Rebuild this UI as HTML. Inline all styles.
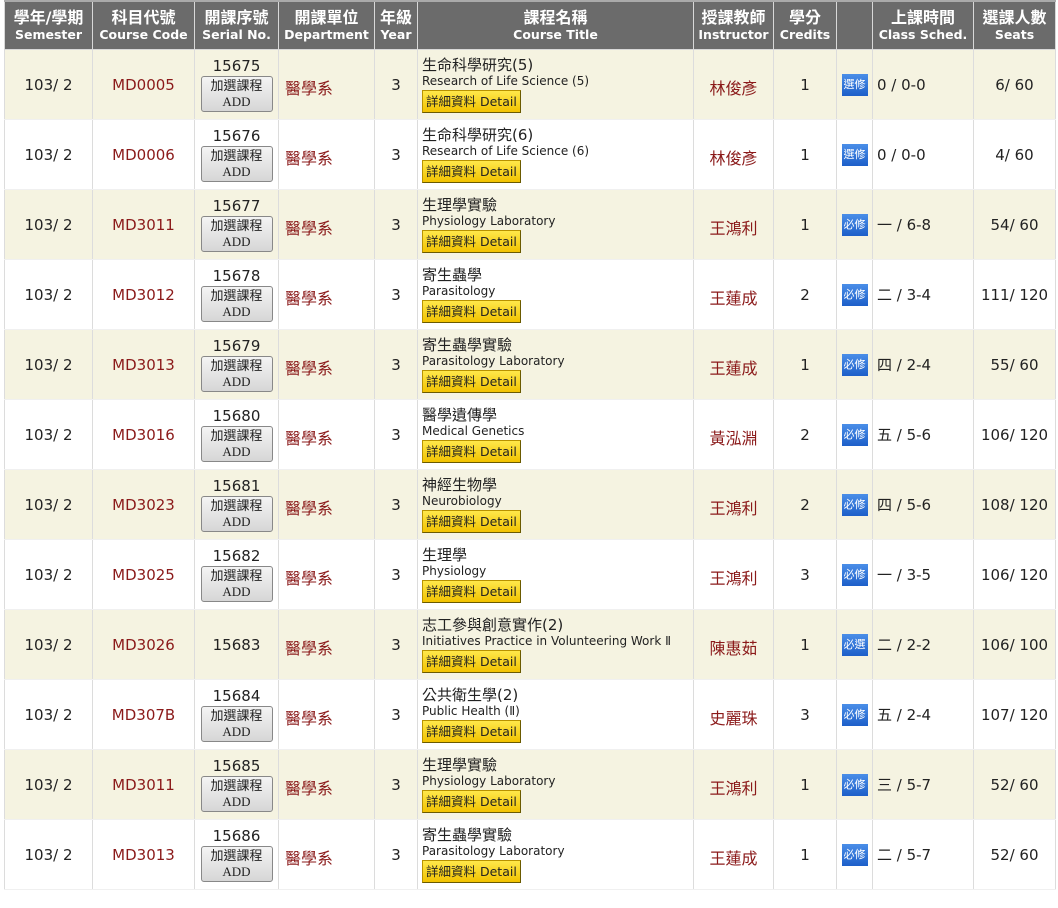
<!DOCTYPE html>
<html><head><meta charset="utf-8">
<style>
body{margin:0;background:#fff;width:1058px;height:908px;overflow:hidden;font-family:"DejaVu Sans","Noto Sans CJK TC",sans-serif;}
table{position:absolute;left:4px;top:0;border-collapse:collapse;table-layout:fixed;width:1051px;}
th{background:#6b6b6b;color:#fff;height:47px;padding:0;border:1px solid #d8d8d8;border-top:2px solid #aaa;font-size:16px;line-height:18px;font-weight:bold;white-space:nowrap;overflow:hidden}
th small{font-size:12.5px;line-height:15px;display:block;}
td{height:69px;padding:0;border:1px solid #dcdcdc;border-top:none;border-bottom:1px solid #f0f0f0;text-align:center;vertical-align:middle;font-size:15px;color:#222;}
tr.o td{background:#f5f3e1;}
.r{color:#8b1a1a;}
.i{font-size:16px;}
.dep{text-align:left;padding-left:6px;color:#8b1a1a;font-size:16px;}
.i span,.dep span{position:relative;top:2px}
.sn{line-height:18px;}
.add{display:block;margin:1px auto 0;width:72px;height:36px;box-sizing:border-box;border:1px solid #888;border-radius:3px;background:linear-gradient(#f4f4f4,#d6d6d6);font-size:13px;line-height:16px;color:#222;padding-top:1px;font-family:"Liberation Serif","Noto Sans CJK TC",serif}
.tt{text-align:left;padding-left:4px;white-space:nowrap}
.tt .c{font-size:15px;line-height:17px;}
.tt .e{font-size:12px;line-height:14px;}
.det{display:inline-block;margin-top:2px;height:21px;line-height:21px;padding:0 3px;background:linear-gradient(#ffe84a,#f2c200);border:1px solid #b89200;border-right-color:#6a5a00;border-bottom-color:#6a5a00;font-size:12.5px;color:#222;}
.tag{display:inline-block;width:26px;height:22px;background:linear-gradient(#4a8ee8,#1d5fc9);color:#fff;font-size:11px;line-height:22px;text-align:center;}
.sch{text-align:left;padding-left:4px;}
</style></head><body>
<table>
<colgroup><col style="width:88px"><col style="width:102px"><col style="width:84px"><col style="width:96px"><col style="width:43px"><col style="width:276px"><col style="width:80px"><col style="width:63px"><col style="width:36px"><col style="width:101px"><col style="width:82px"></colgroup>
<tr><th>學年/學期<small>Semester</small></th><th>科目代號<small>Course Code</small></th><th>開課序號<small>Serial No.</small></th><th>開課單位<small>Department</small></th><th>年級<small>Year</small></th><th>課程名稱<small>Course Title</small></th><th>授課教師<small>Instructor</small></th><th>學分<small>Credits</small></th><th></th><th>上課時間<small>Class Sched.</small></th><th>選課人數<small>Seats</small></th></tr>

<tr class="o"><td>103/ 2</td><td class="r">MD0005</td><td class="sn">15675<span class="add">加選課程<br>ADD</span></td><td class="dep"><span>醫學系</span></td><td>3</td><td class="tt"><div class="c">生命科學研究(5)</div><div class="e">Research of Life Science (5)</div><span class="det">詳細資料 Detail</span></td><td class="r i"><span>林俊彥</span></td><td>1</td><td><span class="tag">選修</span></td><td class="sch">0 / 0-0</td><td>6/ 60</td></tr>

<tr><td>103/ 2</td><td class="r">MD0006</td><td class="sn">15676<span class="add">加選課程<br>ADD</span></td><td class="dep"><span>醫學系</span></td><td>3</td><td class="tt"><div class="c">生命科學研究(6)</div><div class="e">Research of Life Science (6)</div><span class="det">詳細資料 Detail</span></td><td class="r i"><span>林俊彥</span></td><td>1</td><td><span class="tag">選修</span></td><td class="sch">0 / 0-0</td><td>4/ 60</td></tr>

<tr class="o"><td>103/ 2</td><td class="r">MD3011</td><td class="sn">15677<span class="add">加選課程<br>ADD</span></td><td class="dep"><span>醫學系</span></td><td>3</td><td class="tt"><div class="c">生理學實驗</div><div class="e">Physiology Laboratory</div><span class="det">詳細資料 Detail</span></td><td class="r i"><span>王鴻利</span></td><td>1</td><td><span class="tag">必修</span></td><td class="sch">一 / 6-8</td><td>54/ 60</td></tr>

<tr><td>103/ 2</td><td class="r">MD3012</td><td class="sn">15678<span class="add">加選課程<br>ADD</span></td><td class="dep"><span>醫學系</span></td><td>3</td><td class="tt"><div class="c">寄生蟲學</div><div class="e">Parasitology</div><span class="det">詳細資料 Detail</span></td><td class="r i"><span>王蓮成</span></td><td>2</td><td><span class="tag">必修</span></td><td class="sch">二 / 3-4</td><td>111/ 120</td></tr>

<tr class="o"><td>103/ 2</td><td class="r">MD3013</td><td class="sn">15679<span class="add">加選課程<br>ADD</span></td><td class="dep"><span>醫學系</span></td><td>3</td><td class="tt"><div class="c">寄生蟲學實驗</div><div class="e">Parasitology Laboratory</div><span class="det">詳細資料 Detail</span></td><td class="r i"><span>王蓮成</span></td><td>1</td><td><span class="tag">必修</span></td><td class="sch">四 / 2-4</td><td>55/ 60</td></tr>

<tr><td>103/ 2</td><td class="r">MD3016</td><td class="sn">15680<span class="add">加選課程<br>ADD</span></td><td class="dep"><span>醫學系</span></td><td>3</td><td class="tt"><div class="c">醫學遺傳學</div><div class="e">Medical Genetics</div><span class="det">詳細資料 Detail</span></td><td class="r i"><span>黃泓淵</span></td><td>2</td><td><span class="tag">必修</span></td><td class="sch">五 / 5-6</td><td>106/ 120</td></tr>

<tr class="o"><td>103/ 2</td><td class="r">MD3023</td><td class="sn">15681<span class="add">加選課程<br>ADD</span></td><td class="dep"><span>醫學系</span></td><td>3</td><td class="tt"><div class="c">神經生物學</div><div class="e">Neurobiology</div><span class="det">詳細資料 Detail</span></td><td class="r i"><span>王鴻利</span></td><td>2</td><td><span class="tag">必修</span></td><td class="sch">四 / 5-6</td><td>108/ 120</td></tr>

<tr><td>103/ 2</td><td class="r">MD3025</td><td class="sn">15682<span class="add">加選課程<br>ADD</span></td><td class="dep"><span>醫學系</span></td><td>3</td><td class="tt"><div class="c">生理學</div><div class="e">Physiology</div><span class="det">詳細資料 Detail</span></td><td class="r i"><span>王鴻利</span></td><td>3</td><td><span class="tag">必修</span></td><td class="sch">一 / 3-5</td><td>106/ 120</td></tr>

<tr class="o"><td>103/ 2</td><td class="r">MD3026</td><td>15683</td><td class="dep"><span>醫學系</span></td><td>3</td><td class="tt"><div class="c">志工參與創意實作(2)</div><div class="e">Initiatives Practice in Volunteering Work Ⅱ</div><span class="det">詳細資料 Detail</span></td><td class="r i"><span>陳惠茹</span></td><td>1</td><td><span class="tag">必選</span></td><td class="sch">二 / 2-2</td><td>106/ 100</td></tr>

<tr><td>103/ 2</td><td class="r">MD307B</td><td class="sn">15684<span class="add">加選課程<br>ADD</span></td><td class="dep"><span>醫學系</span></td><td>3</td><td class="tt"><div class="c">公共衛生學(2)</div><div class="e">Public Health (Ⅱ)</div><span class="det">詳細資料 Detail</span></td><td class="r i"><span>史麗珠</span></td><td>3</td><td><span class="tag">必修</span></td><td class="sch">五 / 2-4</td><td>107/ 120</td></tr>

<tr class="o"><td>103/ 2</td><td class="r">MD3011</td><td class="sn">15685<span class="add">加選課程<br>ADD</span></td><td class="dep"><span>醫學系</span></td><td>3</td><td class="tt"><div class="c">生理學實驗</div><div class="e">Physiology Laboratory</div><span class="det">詳細資料 Detail</span></td><td class="r i"><span>王鴻利</span></td><td>1</td><td><span class="tag">必修</span></td><td class="sch">三 / 5-7</td><td>52/ 60</td></tr>

<tr><td>103/ 2</td><td class="r">MD3013</td><td class="sn">15686<span class="add">加選課程<br>ADD</span></td><td class="dep"><span>醫學系</span></td><td>3</td><td class="tt"><div class="c">寄生蟲學實驗</div><div class="e">Parasitology Laboratory</div><span class="det">詳細資料 Detail</span></td><td class="r i"><span>王蓮成</span></td><td>1</td><td><span class="tag">必修</span></td><td class="sch">二 / 5-7</td><td>52/ 60</td></tr>
</table>
</body></html>
